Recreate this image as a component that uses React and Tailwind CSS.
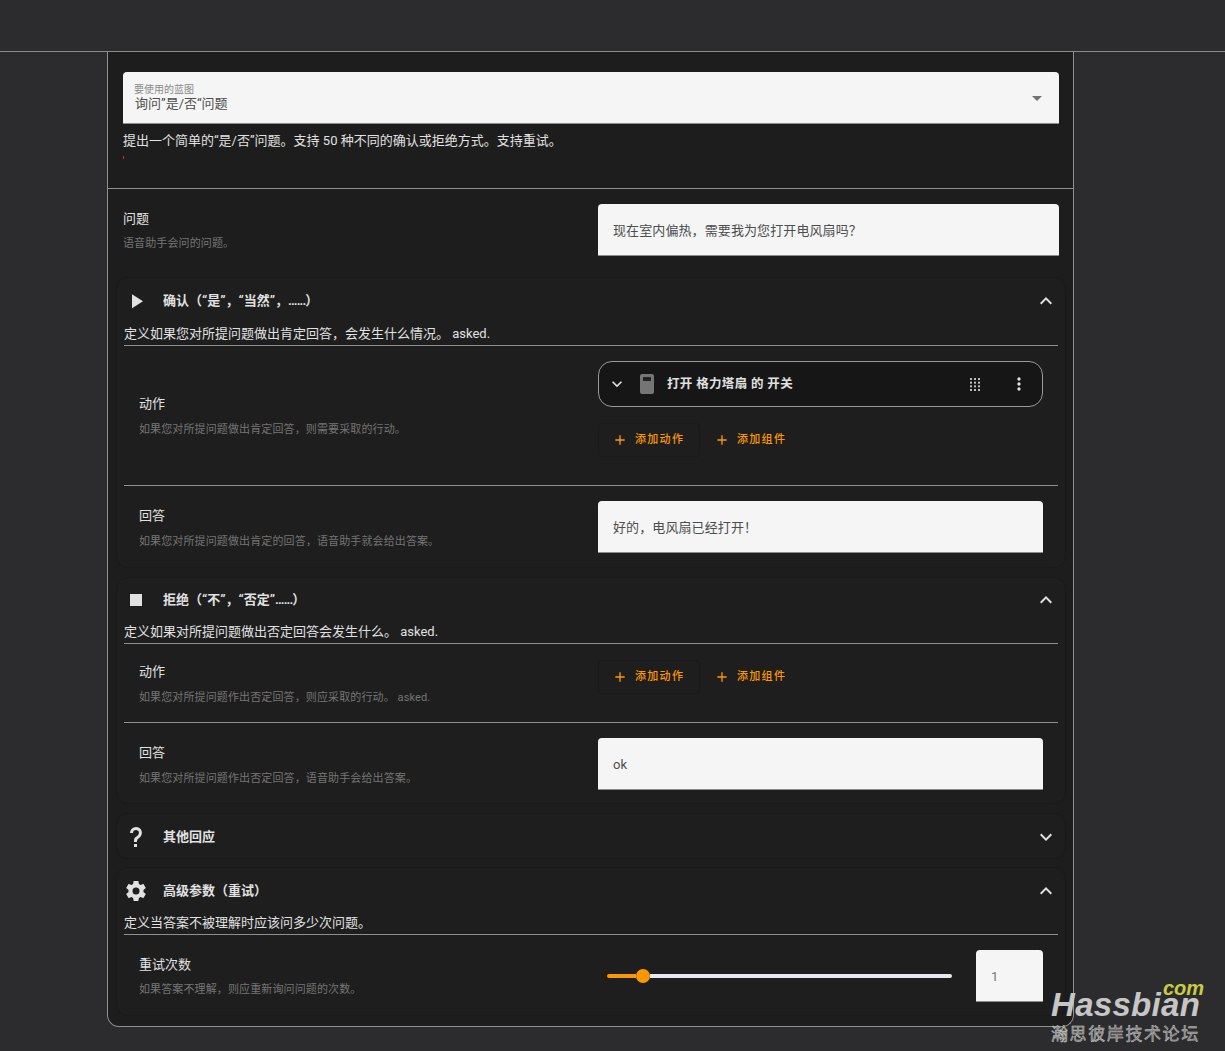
const font = { fontFamily: 'Roboto, "Noto Sans CJK SC", sans-serif' }
const logoFont = { fontFamily: '"Liberation Sans", sans-serif' }

const mdi = {
  play: 'M8,5.14V19.14L19,12.14L8,5.14Z',
  stop: 'M18,18H6V6H18V18Z',
  help: 'M10,19H13V22H10V19M12,2C17.35,2.22 19.68,7.62 16.5,11.67C15.67,12.67 14.33,13.33 13.67,14.17C13,15 13,16 13,17H10C10,15.33 10,13.92 10.67,12.92C11.33,11.92 12.67,11.33 13.5,10.67C15.92,8.43 15.32,5.26 12,5A3,3 0 0,0 9,8H6A6,6 0 0,1 12,2Z',
  cog: 'M12,15.5A3.5,3.5 0 0,1 8.5,12A3.5,3.5 0 0,1 12,8.5A3.5,3.5 0 0,1 15.5,12A3.5,3.5 0 0,1 12,15.5M19.43,12.97C19.47,12.65 19.5,12.33 19.5,12C19.5,11.67 19.47,11.34 19.43,11L21.54,9.37C21.73,9.22 21.78,8.95 21.66,8.73L19.66,5.27C19.54,5.05 19.27,4.96 19.05,5.05L16.56,6.05C16.04,5.66 15.5,5.32 14.87,5.07L14.5,2.42C14.46,2.18 14.25,2 14,2H10C9.75,2 9.54,2.18 9.5,2.42L9.13,5.07C8.5,5.32 7.96,5.66 7.44,6.05L4.95,5.05C4.73,4.96 4.46,5.05 4.34,5.27L2.34,8.73C2.21,8.95 2.27,9.22 2.46,9.37L4.57,11C4.53,11.34 4.5,11.67 4.5,12C4.5,12.33 4.53,12.65 4.57,12.97L2.46,14.63C2.27,14.78 2.21,15.05 2.34,15.27L4.34,18.73C4.46,18.95 4.73,19.03 4.95,18.95L7.44,17.94C7.96,18.34 8.5,18.68 9.13,18.93L9.5,21.58C9.54,21.82 9.75,22 10,22H14C14.25,22 14.46,21.82 14.5,21.58L14.87,18.93C15.5,18.67 16.04,18.34 16.56,17.94L19.05,18.95C19.27,19.03 19.54,18.95 19.66,18.73L21.66,15.27C21.78,15.05 21.73,14.78 21.54,14.63L19.43,12.97Z',
  up: 'M7.41,15.41L12,10.83L16.59,15.41L18,14L12,8L6,14L7.41,15.41Z',
  down: 'M7.41,8.58L12,13.17L16.59,8.58L18,10L12,16L6,10L7.41,8.58Z',
  dots: 'M12,16A2,2 0 0,1 14,18A2,2 0 0,1 12,20A2,2 0 0,1 10,18A2,2 0 0,1 12,16M12,10A2,2 0 0,1 14,12A2,2 0 0,1 12,14A2,2 0 0,1 10,12A2,2 0 0,1 12,10M12,4A2,2 0 0,1 14,6A2,2 0 0,1 12,8A2,2 0 0,1 10,6A2,2 0 0,1 12,4Z',
  plus: 'M19,13H13V19H11V13H5V11H11V5H13V11H19V13Z',
}

function Icon({ d, className }) {
  return (
    <svg viewBox="0 0 24 24" fill="currentColor" className={className}>
      <path d={d} />
    </svg>
  )
}

function Field({ value, className }) {
  return (
    <div className={`h-[52px] flex items-center px-[15px] pt-[2px] bg-[#f5f5f5] rounded-t-[4px] border-b border-[#8c8c8c] text-[13px] tracking-[0.1px] text-[#4d4d4d] ${className}`}>
      {value}
    </div>
  )
}

function Label({ title, desc, className, descClass = 'mt-[9px]' }) {
  return (
    <div className={className}>
      <div className="text-[13px] leading-[18px] text-[#e1e1e1]">{title}</div>
      <div className={`text-[11px] leading-[16px] tracking-[0.12px] text-[#757575] ${descClass}`}>{desc}</div>
    </div>
  )
}

function AddButtons() {
  return (
    <div className="flex items-center">
      <button className="h-[34px] w-[102px] flex items-center pl-[15px] rounded-[4px] border border-[#1a1a1a] text-[#ff9800] text-[11px] font-medium tracking-[1.3px]">
        <Icon d={mdi.plus} className="w-[16px] h-[16px] mr-[7px] -ml-[2px]" />
        添加动作
      </button>
      <button className="h-[34px] w-[102px] flex items-center pl-[16px] text-[#ff9800] text-[11px] font-medium tracking-[1.3px]">
        <Icon d={mdi.plus} className="w-[16px] h-[16px] mr-[7px] -ml-[2px]" />
        添加组件
      </button>
    </div>
  )
}

function Panel({ icon, title, chevron = mdi.up, desc, children, className, headClass = 'h-[45px]' }) {
  return (
    <section className={`rounded-[12px] border border-[#1a1a1a] bg-[#1e1e1e] ${className}`}>
      <div className={`flex items-center px-[7px] ${headClass}`}>
        <div className="w-[24px] flex justify-center text-[#e1e1e1]">
          <Icon d={icon} className="w-[24px] h-[24px]" />
        </div>
        <div className="ml-[15px] text-[13px] font-bold text-[#e1e1e1]">{title}</div>
        <Icon d={chevron} className="ml-auto w-[24px] h-[24px] text-[#e1e1e1]" />
      </div>
      {desc && (
        <div className="mx-[7px] h-[22px] border-b border-[#8f8f8f] text-[13px] leading-[20px] text-[#e1e1e1]">{desc}</div>
      )}
      {children}
    </section>
  )
}

function Row({ children, className }) {
  return <div className={`mx-[7px] px-[15px] flex justify-between ${className}`}>{children}</div>
}

function Dots() {
  return <span className="tracking-[-0.9px]">......</span>
}

export default function App() {
  return (
    <div style={font} className="relative h-[1051px] overflow-hidden bg-[#2c2c2e]">
      <header className="h-[52px] border-b border-[#8a8a8a]" />

      <main className="ml-[107px] w-[967px] h-[975px] bg-[#1d1d1d] border-x border-b border-[#8f8f8f] rounded-b-[12px]">
        <div className="h-[137px] pl-[15px] pr-[14px] pt-[20px] border-b border-[#8f8f8f]">
          <div className="relative h-[52px] bg-[#f5f5f5] rounded-t-[4px] border-b border-[#8c8c8c] pl-[11px] pt-[12px]">
            <div className="text-[10px] leading-[12px] text-[#8a8a8a]">要使用的蓝图</div>
            <div className="ml-[1px] text-[13px] leading-[16px] text-[#4d4d4d]">询问”是/否“问题</div>
            <div className="absolute right-[17px] top-[24px] border-x-[5px] border-t-[5px] border-x-transparent border-t-[#737373]" />
          </div>
          <p className="mt-[7px] text-[13px] leading-[20px] text-[#e1e1e1]">提出一个简单的“是/否”问题。支持 50 种不同的确认或拒绝方式。支持重试。</p>
          <div className="mt-[5px] w-[1px] h-[3px] bg-[#f0203c]" />
        </div>

        <div className="h-[88px] pl-[15px] pr-[14px] pt-[15px] flex justify-between">
          <Label title="问题" desc="语音助手会问的问题。" className="pt-[6px]" descClass="mt-[8px]" />
          <Field value="现在室内偏热，需要我为您打开电风扇吗？" className="w-[461px]" />
        </div>

        <div className="ml-[8px] mr-[7px] flex flex-col">
          <Panel
            icon={mdi.play}
            title={<>确认（“是”，“当然”，<Dots />）</>}
            desc="定义如果您对所提问题做出肯定回答，会发生什么情况。 asked."
            headClass="h-[46px] pb-[1px]"
            className="h-[291px]"
          >
            <Row className="h-[140px] pt-[15px] border-b border-[#8f8f8f]">
              <Label title="动作" desc="如果您对所提问题做出肯定回答，则需要采取的行动。" className="pt-[34px]" />
              <div className="w-[445px]">
                <div className="h-[46px] flex items-center pl-[8px] pr-[13px] rounded-[14px] border border-[#9a9a9a] bg-[#161616]">
                  <Icon d={mdi.down} className="w-[20px] h-[20px] text-[#e1e1e1]" />
                  <svg viewBox="0 0 14 20" className="ml-[13px] w-[14px] h-[20px]">
                    <rect width="14" height="20" rx="2" fill="#757575" />
                    <rect x="3" y="3" width="8" height="4" rx="0.5" fill="#222" />
                  </svg>
                  <div className="ml-[13px] text-[12.5px] font-bold tracking-[0.35px] text-[#e1e1e1]">打开 格力塔扇 的 开关</div>
                  <svg viewBox="0 0 10 13" className="ml-auto w-[10px] h-[13px] text-[#bdbdbd]" fill="currentColor">
                    {[0, 4, 8].map((x) => [0, 3.67, 7.33, 11].map((y) => (
                      <rect key={`${x}-${y}`} x={x} y={y} width="2" height="2" />
                    )))}
                  </svg>
                  <Icon d={mdi.dots} className="ml-[29px] w-[20px] h-[20px] text-[#e1e1e1]" />
                </div>
                <div className="mt-[16px]"><AddButtons /></div>
              </div>
            </Row>
            <Row className="pt-[15px]">
              <Label title="回答" desc="如果您对所提问题做出肯定的回答，语音助手就会给出答案。" className="pt-[6px]" />
              <Field value="好的，电风扇已经打开！" className="w-[445px]" />
            </Row>
          </Panel>

          <Panel
            icon={mdi.stop}
            title={<>拒绝（“不”，“否定”<Dots />）</>}
            desc="定义如果对所提问题做出否定回答会发生什么。 asked."
            headClass="h-[44px] pb-[1px]"
            className="h-[227px] mt-[9px]"
          >
            <Row className="h-[79px] pt-[15px] border-b border-[#8f8f8f]">
              <Label title="动作" desc="如果您对所提问题作出否定回答，则应采取的行动。 asked." className="pt-[4px]" />
              <div className="w-[445px] mt-[1px]"><AddButtons /></div>
            </Row>
            <Row className="pt-[15px]">
              <Label title="回答" desc="如果您对所提问题作出否定回答，语音助手会给出答案。" className="pt-[6px]" />
              <Field value="ok" className="w-[445px]" />
            </Row>
          </Panel>

          <Panel icon={mdi.help} chevron={mdi.down} title="其他回应" className="h-[46px] mt-[9px]" />

          <Panel icon={mdi.cog} title="高级参数（重试）" desc="定义当答案不被理解时应该问多少次问题。" className="h-[149px] mt-[8px]">
            <Row className="pt-[15px]">
              <Label title="重试次数" desc="如果答案不理解，则应重新询问问题的次数。" className="pt-[6px]" descClass="mt-[8px]" />
              <div className="w-[445px] flex items-center h-[52px] pl-[9px]">
                <div className="w-[345px] flex items-center">
                  <div className="w-[29px] h-[4px] rounded-l-full bg-[#ff9800]" />
                  <div className="w-[14px] h-[14px] rounded-full bg-[#ff9800]" />
                  <div className="flex-1 h-[4px] rounded-r-full bg-[#e8e8ee]" />
                </div>
                <Field value="1" className="ml-[24px] w-[67px] !text-[#757575]" />
              </div>
            </Row>
          </Panel>
        </div>
      </main>

      <div className="absolute left-[1051px] top-[980px] w-[160px] pointer-events-none">
        <div style={logoFont} className="absolute right-[7px] top-[2px] text-[20px] leading-[13px] font-bold italic text-[#c9cc44]">com</div>
        <div style={logoFont} className="absolute left-0 top-[15px] text-[33px] leading-[19px] font-bold italic tracking-[0.3px] text-[#c6c6c6]">Hassbian</div>
        <div className="absolute left-0 top-[44px] whitespace-nowrap text-[17px] leading-[20px] tracking-[1.6px] text-[#777777] [-webkit-text-stroke:0.4px_#d4d4d4]">瀚思彼岸技术论坛</div>
      </div>
    </div>
  )
}
